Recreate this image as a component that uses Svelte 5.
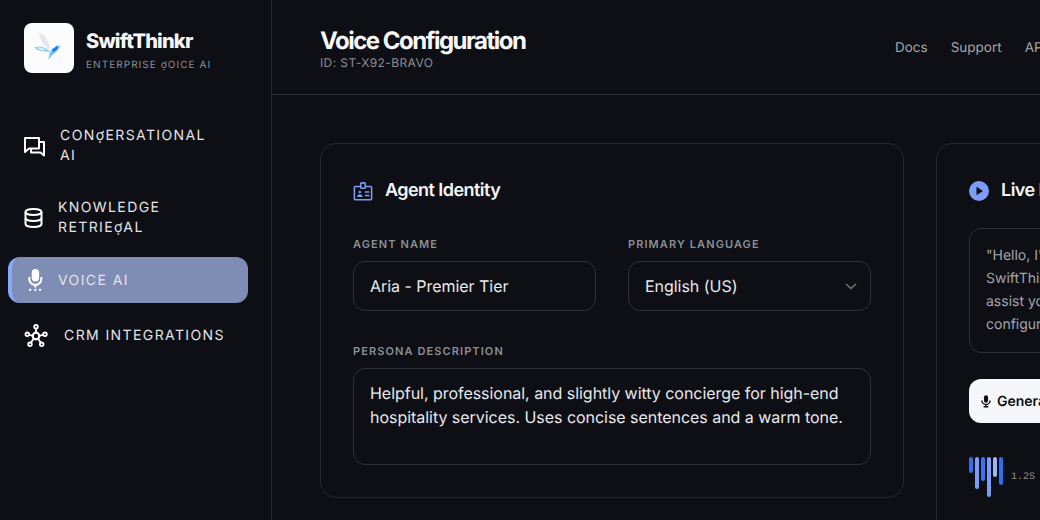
<script>
  const bars = [
    { h: 16, c: '#2f6fed' }, { h: 32, c: '#7c9cf5' }, { h: 24, c: '#3b74ee' },
    { h: 40, c: '#7c9cf5' }, { h: 20, c: '#9db4f7' }, { h: 28, c: '#2f6fed' }
  ];
</script>

<div class="shell">
  <aside class="side">
    <div class="brand">
      <div class="logo">
        <svg width="32" height="32" viewBox="0 0 32 32">
          <polygon points="5,1 11,3 14,8 18,16 15,17 9,10" fill="#e6e7ec"/>
          <polygon points="1,15 9,14.500 14,17 18,20 11,19.500 4,18" fill="#8fd3f5"/>
          <polygon points="4,15.800 9,15.800 13,18 8,17.700" fill="#e8f5fd"/>
          <polygon points="15,28 17,21 19,17 25,13 27,15 24,19 19,23" fill="#6cc0f2"/>
          <polygon points="19,18 24,14 25,16 20.500,20" fill="#1f6fe8"/>
          <polygon points="26,13.800 31,15 26,15" fill="#d3d6dc"/>
        </svg>
      </div>
      <div class="brand-text">
        <div class="brand-name">SwiftThinkr</div>
        <div class="brand-sub">ENTERPRISE ợOICE AI</div>
      </div>
    </div>
    <nav class="nav">
      <div class="item i1">
        <svg class="ic" width="24" height="24" viewBox="0 0 24 24" fill="none" stroke="currentColor" stroke-width="2" stroke-linejoin="round"><path d="M1 4h14v10.500H5L1 18z"/><path d="M15 8h5v13.500l-3.500-3H7v-4"/></svg>
        <span class="lbl">CONợERSATIONAL AI</span>
      </div>
      <div class="item i2">
        <svg class="ic" width="22" height="24" viewBox="0 0 22 24" fill="none" stroke="currentColor" stroke-width="2"><ellipse cx="9.500" cy="6" rx="8" ry="3"/><path d="M1.500 6v12c0 1.700 3.600 3 8 3s8-1.300 8-3V6"/><path d="M1.500 12c0 1.700 3.600 3 8 3s8-1.300 8-3"/></svg>
        <span class="lbl">KNOWLEDGE RETRIEợAL</span>
      </div>
      <div class="item active">
        <svg class="ic" width="22" height="24" viewBox="0 0 22 24" fill="currentColor"><rect x="7.700" y="1" width="7.400" height="12.500" rx="3.700"/><path d="M5.300 9v2a6 6 0 0 0 12 0V9" fill="none" stroke="currentColor" stroke-width="2"/><path d="M11.300 17v2.500" stroke="currentColor" stroke-width="2"/><rect x="5" y="20.800" width="2.200" height="2"/><rect x="10.200" y="20.800" width="2.200" height="2"/><rect x="15" y="20.800" width="2.200" height="2"/></svg>
        <span class="lbl">VOICE AI</span>
      </div>
      <div class="item i4">
        <svg class="ic" width="28" height="24" viewBox="0 0 28 24" fill="none" stroke="currentColor" stroke-width="1.800"><circle cx="12" cy="12" r="3.300" stroke-width="2.200"/><circle cx="12" cy="2.700" r="1.800"/><circle cx="3.300" cy="10.300" r="1.800"/><circle cx="21" cy="10.300" r="1.800"/><circle cx="6" cy="20.300" r="1.800"/><circle cx="17.700" cy="20.300" r="1.800"/><path d="M12 4.500v4.200M5 10.800l3.700.8M19.300 10.800l-3.700.8M7 18.800l2.600-4M16.700 18.800l-2.500-4"/></svg>
        <span class="lbl">CRM INTEGRATIONS</span>
      </div>
    </nav>
  </aside>

  <div class="main">
    <header class="top">
      <div>
        <h1>Voice Configuration</h1>
        <div class="id">ID: ST-X92-BRAVO</div>
      </div>
      <div class="links"><span>Docs</span><span>Support</span><span>API</span></div>
    </header>

    <div class="content">
      <section class="card identity">
        <h2>
          <svg width="20" height="21" viewBox="0 0 22 22" fill="none" stroke="#7c9cf5" stroke-width="1.700"><path d="M8 5.500H2.500a1 1 0 0 0-1 1V19a1 1 0 0 0 1 1h17a1 1 0 0 0 1-1V6.500a1 1 0 0 0-1-1H14"/><rect x="8.500" y="1.500" width="5" height="6" rx="1"/><circle cx="7.500" cy="11.500" r="1.400" fill="#7c9cf5" stroke="none"/><path d="M4.500 17c0-2 1.300-3 3-3s3 1 3 3z" fill="#7c9cf5" stroke="none"/><path d="M13 11.500h5M13 15.500h5"/></svg>
          Agent Identity
        </h2>
        <div class="row">
          <div class="field">
            <div class="label">AGENT NAME</div>
            <div class="input">Aria - Premier Tier</div>
          </div>
          <div class="field">
            <div class="label">PRIMARY LANGUAGE</div>
            <div class="input select">English (US)
              <svg width="14" height="14" viewBox="0 0 14 14" fill="none" stroke="#73757c" stroke-width="1.500"><path d="M2 5l5 4.500L12 5"/></svg>
            </div>
          </div>
        </div>
        <div class="field">
          <div class="label">PERSONA DESCRIPTION</div>
          <div class="area">Helpful, professional, and slightly witty concierge for high-end hospitality services. Uses concise sentences and a warm tone.</div>
        </div>
      </section>

      <section class="card live">
        <h2>
          <svg width="20" height="20" viewBox="0 0 20 20"><circle cx="10" cy="10" r="10" fill="#7c9cf5"/><path d="M7.500 5.800v8.400L14 10z" fill="#0d0f14"/></svg>
          Live Preview
        </h2>
        <div class="quote">"Hello, I'm Aria, your SwiftThinkr assistant. I can assist you with your configuration today."</div>
        <div class="gen">
          <svg width="14" height="14" viewBox="0 0 24 24" fill="#0d0f14"><rect x="8.500" y="2" width="7" height="13" rx="3.500"/><path d="M5 11a7 7 0 0 0 14 0M12 18v4M8 22h8" fill="none" stroke="#0d0f14" stroke-width="2.500"/></svg>
          Generate Speech
        </div>
        <div class="wave">
          <div class="bars">
            {#each bars as b}
              <span class="bar" style="height:{b.h}px;background:{b.c}"></span>
            {/each}
          </div>
          <span class="time">1.2S</span>
        </div>
      </section>
    </div>
  </div>
</div>

<style>
  :global(body) { margin: 0; background: #0d0f14; overflow: hidden; }
  .shell { display: flex; width: 1040px; height: 520px; overflow: hidden; background: #0d0f14; color: #f3f4f6; font-family: Inter, sans-serif; text-rendering: geometricPrecision; }
  .side { flex: 0 0 272px; box-sizing: border-box; border-right: 1px solid #26272d; padding: 23px 23px 0 8px; }
  .brand { display: flex; align-items: center; gap: 12px; padding-left: 16px; }
  .logo { width: 50px; height: 50px; border-radius: 8px; background: #fcfcff; display: flex; align-items: center; justify-content: center; flex: none; }
  .brand-text { padding-top: 6px; }
  .brand-name { font-size: 20px; font-weight: 800; letter-spacing: -0.800px; line-height: 24px; color: #f6f7fa; }
  .brand-sub { font-size: 10px; letter-spacing: 1.050px; line-height: 16px; color: #8c8e96; margin-top: 4px; white-space: nowrap; }
  .nav { display: flex; flex-direction: column; margin-top: 42px; }
  .item { display: flex; align-items: center; border-radius: 12px; box-sizing: border-box; padding: 0 16px; gap: 12px; height: 46px; font-size: 14px; letter-spacing: 1.400px; line-height: 20px; color: #e4e4e8; }
  .item .ic { flex: none; color: #fff; }
  .i1 { height: 62px; padding-right: 40px; }
  .i2 { height: 62px; margin-top: 10px; }
  .active { margin-top: 8px; height: 46px; background: #7f8cb3; border-left: 4px solid #8ba6ff; padding-left: 12px; }
  .active .lbl { padding-top: 1px; }
  .i4 { margin-top: 10px; }
  .i4 .lbl { white-space: nowrap; }
  .main { flex: 1; min-width: 0; }
  .top { height: 95px; box-sizing: border-box; border-bottom: 1px solid #2b2c32; display: flex; justify-content: space-between; align-items: flex-start; padding: 25px 0 0 48px; white-space: nowrap; }
  h1 { margin: 0; font-size: 24px; line-height: 32px; font-weight: 700; letter-spacing: -1.500px; color: #f8f8fa; }
  .id { font-size: 12px; letter-spacing: 0.400px; line-height: 16px; color: #8c8e96; margin-top: -2px; }
  .links { display: flex; gap: 23px; font-size: 13.500px; line-height: 20px; color: #a3a5ad; padding-top: 13px; width: 145px; flex: none; }
  .content { display: flex; gap: 32px; padding: 48px 0 0 48px; align-items: flex-start; }
  .card { box-sizing: border-box; border: 1px solid #26272d; border-radius: 16px; padding: 32px; }
  .identity { flex: 0 0 584px; height: 355px; }
  .live { flex: 0 0 300px; height: 400px; }
  h2 { margin: 0; padding-top: 1px; display: flex; align-items: center; gap: 12px; font-size: 18px; line-height: 28px; font-weight: 600; letter-spacing: -0.550px; color: #f4f5f7; white-space: nowrap; }
  .row { display: flex; gap: 32px; margin-top: 31px; margin-bottom: 32px; }
  .field { flex: 1; min-width: 0; }
  .label { font-size: 11px; font-weight: 600; line-height: 16px; letter-spacing: 1.100px; color: #8c8e96; margin-bottom: 9px; white-space: nowrap; }
  .input { box-sizing: border-box; height: 50px; border: 1px solid #2f3036; border-radius: 12px; padding: 0 16px; display: flex; align-items: center; font-size: 16px; letter-spacing: -0.035px; color: #e8e8ec; }
  .select { justify-content: space-between; padding-right: 12px; }
  .area { box-sizing: border-box; height: 97px; border: 1px solid #2f3036; border-radius: 12px; padding: 12px 16px; font-size: 16px; line-height: 24px; letter-spacing: -0.035px; color: #e8e8ec; }
  .quote { box-sizing: border-box; margin-top: 23px; height: 125px; border: 1px solid #2f3036; border-radius: 12px; padding: 15px 16px; font-size: 14px; line-height: 23px; color: #a3a5ad; width: 234px; }
  .gen { margin-top: 26px; width: 234px; box-sizing: border-box; height: 44px; background: #f6f7fb; border-radius: 12px; color: #0d0f14; display: flex; align-items: center; padding-left: 10px; gap: 4px; font-size: 14px; font-weight: 600; white-space: nowrap; }
  .wave { display: flex; align-items: flex-end; gap: 8px; margin-top: 34px; }
  .bars { display: flex; gap: 2px; align-items: flex-start; height: 40px; }
  .bar { width: 4px; border-radius: 2px; display: block; }
  .time { font-family: "Liberation Mono", monospace; font-size: 10px; color: #8c8e96; line-height: 16px; margin-bottom: 11px; }
</style>
